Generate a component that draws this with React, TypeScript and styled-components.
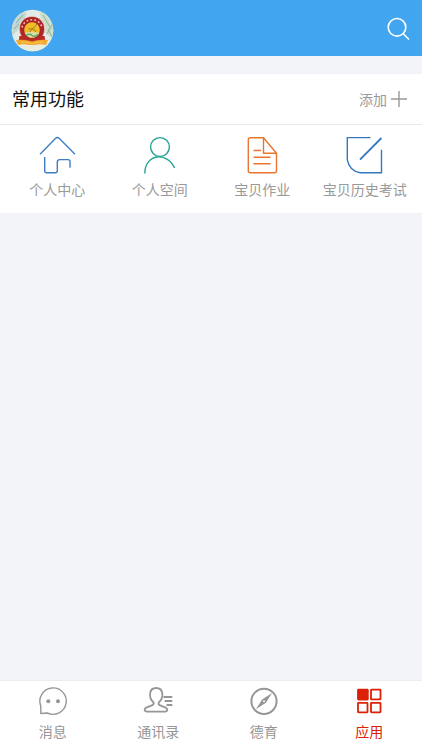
import React from 'react';
import styled, { createGlobalStyle } from 'styled-components';

const GlobalStyle = createGlobalStyle`
  *, *::before, *::after { box-sizing: border-box; }
  body {
    margin: 0;
    background: #f3f4f9;
    font-family: "Noto Sans CJK SC", "Noto Sans", sans-serif;
  }
  button { font-family: inherit; }
`;

const Page = styled.div`
  min-height: 100vh;
  display: flex;
  flex-direction: column;
`;

const Header = styled.header`
  display: flex;
  align-items: center;
  justify-content: space-between;
  height: 56px;
  padding: 4px 10px 0 11px;
  background: #42a5f0;
`;

const PlainButton = styled.button`
  display: flex;
  align-items: center;
  padding: 0;
  border: 0;
  background: none;
  color: inherit;
  cursor: pointer;
`;

const Section = styled.section`
  margin-top: 18px;
  background: #fff;
`;

const SectionHead = styled.div`
  display: flex;
  align-items: center;
  justify-content: space-between;
  height: 51px;
  padding: 0 14px 0 12px;
  border-bottom: 1px solid #e9e9ec;
`;

const Title = styled.h2`
  margin: 0;
  padding-bottom: 2px;
  font-size: 18px;
  line-height: 24px;
  font-weight: 400;
  color: #111;
`;

const AddButton = styled(PlainButton)`
  gap: 3px;
  font-size: 14px;
  line-height: 20px;
  color: #999;
`;

const Grid = styled.div`
  display: grid;
  grid-template-columns: repeat(4, 1fr);
  padding: 10px 6px 14px;
`;

const Shortcut = styled(PlainButton)`
  flex-direction: column;
  gap: 4px;
  font-size: 14px;
  line-height: 20px;
  color: #999;
  white-space: nowrap;
`;

const Spacer = styled.main`
  flex: 1;
`;

const TabBar = styled.nav`
  display: grid;
  grid-template-columns: repeat(4, 1fr);
  height: 70px;
  border-top: 1px solid #ececef;
  background: #fff;
`;

const Tab = styled(PlainButton)<{ $active?: boolean }>`
  flex-direction: column;
  gap: 5px;
  padding-top: 5px;
  font-size: 14px;
  line-height: 20px;
  color: ${({ $active }) => ($active ? '#dc2108' : '#969696')};
`;

const Line = styled.svg<{ $stroke?: number }>`
  display: block;
  fill: none;
  stroke: currentColor;
  stroke-width: ${({ $stroke }) => $stroke ?? 1.4};
`;

const Logo = () => (
  <svg width="43" height="43" viewBox="0 0 43 43" aria-hidden="true">
    <defs>
      <clipPath id="crest"><circle cx="21.5" cy="21.5" r="20.8" /></clipPath>
    </defs>
    <g clipPath="url(#crest)">
      <rect width="43" height="43" fill="#e2ebe6" />
      <path d="M0 13 12 3 16 4 8 20 0 28Z" fill="#c5d8d2" />
      <path d="M5 14 12 6M3 20 8 15" stroke="#9fbcb1" strokeWidth="1.2" />
      <path d="M28 2 43 8 43 30 35 25Z" fill="#cfdfce" />
      <path d="M32 6 40 20M42 14 36 25M37 20 41 28" stroke="#9abd9d" strokeWidth="1.2" />
      <path d="M0 36Q22 33 43 36V43H0Z" fill="#e9eddf" />
    </g>
    <circle cx="21" cy="20" r="12.8" fill="#ae2529" stroke="#f1e6dc" strokeWidth=".8" />
    <path d="M11 18.5a10.3 10.3 0 0 1 20 0" fill="none" stroke="#f3c2ae" strokeWidth="1.5" strokeDasharray="1.8 2.2" />
    <circle cx="21" cy="21" r="7.8" fill="#f0bd27" />
    <path d="M13.8 24q7.2-2.5 14.4 0-2 4.8-7.2 4.8T13.8 24Z" fill="#d9dd9b" />
    <path d="M15 26.4q4-2.4 6 0t6-1" fill="none" stroke="#63a271" strokeWidth="1.4" />
    <path d="M17.5 20q6-1 7.5 3M26 15l-7.5 8" fill="none" stroke="#967522" strokeWidth=".9" />
    <path d="m8.5 27 4-.5 3.5 3h10l3.5-3 4 .5 1 6h-27Z" fill="#b82b24" />
    <path d="M5 31q9-1 16 1.5 7-2.5 16-1.5l-2 5q-7-1.5-11 0h-6q-5-1.5-11 0Z" fill="#f5a92e" />
    <path d="M10 33q6 0 11 1.5 5-1.5 11-1.5" fill="none" stroke="#f8c64b" strokeWidth="1" />
  </svg>
);

const SearchIcon = () => (
  <Line width="26" height="26" viewBox="386 17 26 26" $stroke={1.6} aria-hidden="true">
    <circle cx="397" cy="27.3" r="8.8" />
    <path d="m403 33.5 6 6" />
  </Line>
);

const PlusIcon = () => (
  <Line width="18" height="18" viewBox="0 0 18 18" aria-hidden="true">
    <path d="M1 9h16M9 1v16" />
  </Line>
);

const HomeIcon = () => (
  <Line width="38" height="40" viewBox="38 135 38 40" color="#3f7fc1" aria-hidden="true">
    <path d="m40 154.3 15.4-15.8q2-2 4 0l15.6 15.8M44.7 157v13.7q0 2 2 2h8.6q2 0 2-2v-8.7q0-2.4 2.4-2.4h8.3q2 0 2 2v6.2" />
  </Line>
);

const PersonIcon = () => (
  <Line width="38" height="40" viewBox="141 135 38 40" color="#22a393" aria-hidden="true">
    <circle cx="160" cy="147" r="9.4" />
    <path d="M144.8 173.5c0-20 22.7-22 29.7-5.5" />
  </Line>
);

const HomeworkIcon = () => (
  <Line width="38" height="40" viewBox="243 135 38 40" color="#e9762e" aria-hidden="true">
    <path d="M263.5 137.8h-13.2q-2 0-2 2v30.9q0 2 2 2h24.2q2 0 2-2v-17.5l-13-15.4v15.4h13M253.5 150.5h7.5M253.5 157.3h17M253.5 163.8h17" strokeLinejoin="round" />
  </Line>
);

const ExamIcon = () => (
  <Line width="38" height="40" viewBox="346 135 38 40" color="#3478c1" aria-hidden="true">
    <path d="M370.5 137.6h-23.2v22q2 11.5 13 13.1h21.2v-23" />
    <path d="m360 159.6 21.4-21.6" strokeWidth="1.8" />
  </Line>
);

const MessageIcon = () => (
  <Line width="32" height="30" viewBox="37 686 32 30" aria-hidden="true">
    <path d="M40.8 713.5v-7.5a13.2 13.2 0 1 1 6.5 7Z" strokeLinejoin="round" />
    <circle cx="48.3" cy="701.3" r="2" fill="currentColor" stroke="none" />
    <circle cx="58" cy="701.3" r="2" fill="currentColor" stroke="none" />
  </Line>
);

const ContactsIcon = () => (
  <Line width="32" height="30" viewBox="142.5 686 32 30" $stroke={1.8} aria-hidden="true">
    <path d="M154 702.3c-5-4.3-5-14.3 2.7-14.3s7.7 10 2.7 14.3c-.7 1.5-.4 2.4 1.2 3l5 2q2.4 1 2.1 3-.3 1.4-2 1.4h-18.2q-2 0-2.3-1.4-.3-2 2.1-3l5-2c1.7-.7 2.3-1.5 1.7-3Z" strokeLinejoin="round" />
    <path d="M164 697h8.8M165.2 701h7.6M167 705h5.8" />
  </Line>
);

const CompassIcon = () => (
  <Line width="32" height="30" viewBox="247.5 686 32 30" $stroke={2} aria-hidden="true">
    <circle cx="263.5" cy="701.3" r="12.6" />
    <path fillRule="evenodd" fill="currentColor" stroke="none" d="m271.6 693-6.2 9.7-10 6.5 6.2-9.6Zm-8.1 7.2a1 1 0 1 0 0 2 1 1 0 0 0 0-2Z" />
  </Line>
);

const AppsIcon = () => (
  <Line width="32" height="30" viewBox="353 686 32 30" $stroke={1.8} aria-hidden="true">
    <rect x="358" y="689.7" width="9.8" height="9.8" rx=".5" fill="currentColor" />
    <rect x="371" y="689.7" width="9.5" height="9.7" rx=".5" />
    <rect x="358" y="702.8" width="9.5" height="9.5" rx=".5" />
    <rect x="371" y="702.8" width="9.5" height="9.5" rx=".5" />
  </Line>
);

const shortcuts = [
  { label: '个人中心', Icon: HomeIcon },
  { label: '个人空间', Icon: PersonIcon },
  { label: '宝贝作业', Icon: HomeworkIcon },
  { label: '宝贝历史考试', Icon: ExamIcon },
];

const tabs = [
  { label: '消息', Icon: MessageIcon },
  { label: '通讯录', Icon: ContactsIcon },
  { label: '德育', Icon: CompassIcon },
  { label: '应用', Icon: AppsIcon, active: true },
];

const SearchButton = styled(PlainButton)`
  color: #fff;
`;

export default function App() {
  return (
    <Page>
      <GlobalStyle />
      <Header>
        <PlainButton aria-label="学校"><Logo /></PlainButton>
        <SearchButton aria-label="搜索"><SearchIcon /></SearchButton>
      </Header>
      <Section>
        <SectionHead>
          <Title>常用功能</Title>
          <AddButton>添加<PlusIcon /></AddButton>
        </SectionHead>
        <Grid>
          {shortcuts.map(({ label, Icon }) => (
            <Shortcut key={label}><Icon />{label}</Shortcut>
          ))}
        </Grid>
      </Section>
      <Spacer />
      <TabBar>
        {tabs.map(({ label, Icon, active }) => (
          <Tab key={label} $active={active} aria-current={active ? 'page' : undefined}>
            <Icon />{label}
          </Tab>
        ))}
      </TabBar>
    </Page>
  );
}
